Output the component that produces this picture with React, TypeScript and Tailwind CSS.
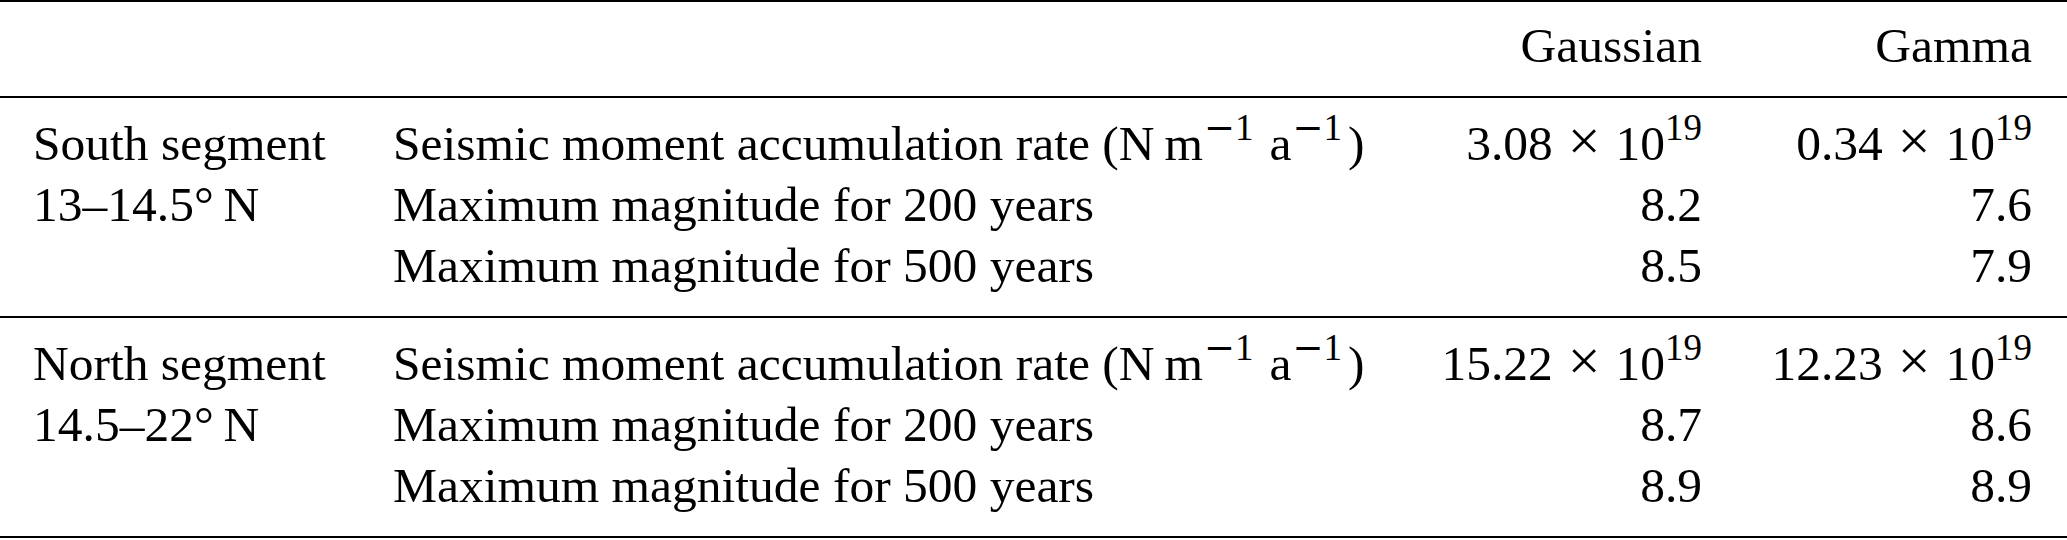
import React from 'react';

const Sup: React.FC<{ children: React.ReactNode }> = ({ children }) => (
  <span className="text-[37px] leading-[0] align-[20px]">{children}</span>
);

// wider math-style minus for the unit exponents
const Inv: React.FC = () => (
  <span className="text-[37px] leading-[0] align-[20px] ml-[1px] mr-[6px]">
    <span className="font-['DejaVu_Serif',serif]">−</span>1
  </span>
);

const Rule: React.FC = () => <div className="h-[2px] bg-black" />;

type Row = {
  segment?: string;
  label: React.ReactNode;
  gaussian: React.ReactNode;
  gamma: React.ReactNode;
};

const rateLabel = (
  <>
    Seismic moment accumulation rate (N<span className="ml-[10px]">m</span>
    <Inv />
    <span className="ml-[10px]">a</span>
    <Inv />)
  </>
);

const pow = (v: string) => (
  <>
    {v}
    <span className="mx-[15px] text-[58px] leading-[0]">×</span>10<Sup>19</Sup>
  </>
);

const sections: Row[][] = [
  [
    { segment: 'South segment', label: rateLabel, gaussian: pow('3.08'), gamma: pow('0.34') },
    { segment: '13–14.5°\u2009N', label: 'Maximum magnitude for 200 years', gaussian: '8.2', gamma: '7.6' },
    { label: 'Maximum magnitude for 500 years', gaussian: '8.5', gamma: '7.9' },
  ],
  [
    { segment: 'North segment', label: rateLabel, gaussian: pow('15.22'), gamma: pow('12.23') },
    { segment: '14.5–22°\u2009N', label: 'Maximum magnitude for 200 years', gaussian: '8.7', gamma: '8.6' },
    { label: 'Maximum magnitude for 500 years', gaussian: '8.9', gamma: '8.9' },
  ],
];

const gridCols = 'grid grid-cols-[360px_900px_409px_330px] pl-[33px]';
const cell = 'h-[61px] leading-[61px] whitespace-nowrap';

const App: React.FC = () => {
  return (
    <div className="w-[2067px] h-[540px] bg-white text-black text-[49.5px] font-['Liberation_Serif',serif]">
      <Rule />
      <div className={`${gridCols} pt-[13px] pb-[20px]`}>
        <div className={cell} />
        <div className={cell} />
        <div className={`${cell} text-right`}>Gaussian</div>
        <div className={`${cell} text-right`}>Gamma</div>
      </div>
      <Rule />
      {sections.map((rows, i) => (
        <React.Fragment key={i}>
          <div className={`${gridCols} pt-[15px] pb-[20px]`}>
            {rows.map((row, j) => (
              <React.Fragment key={j}>
                <div className={cell}>{row.segment}</div>
                <div className={cell}>{row.label}</div>
                <div className={`${cell} text-right`}>{row.gaussian}</div>
                <div className={`${cell} text-right`}>{row.gamma}</div>
              </React.Fragment>
            ))}
          </div>
          <Rule />
        </React.Fragment>
      ))}
    </div>
  );
};

export default App;
